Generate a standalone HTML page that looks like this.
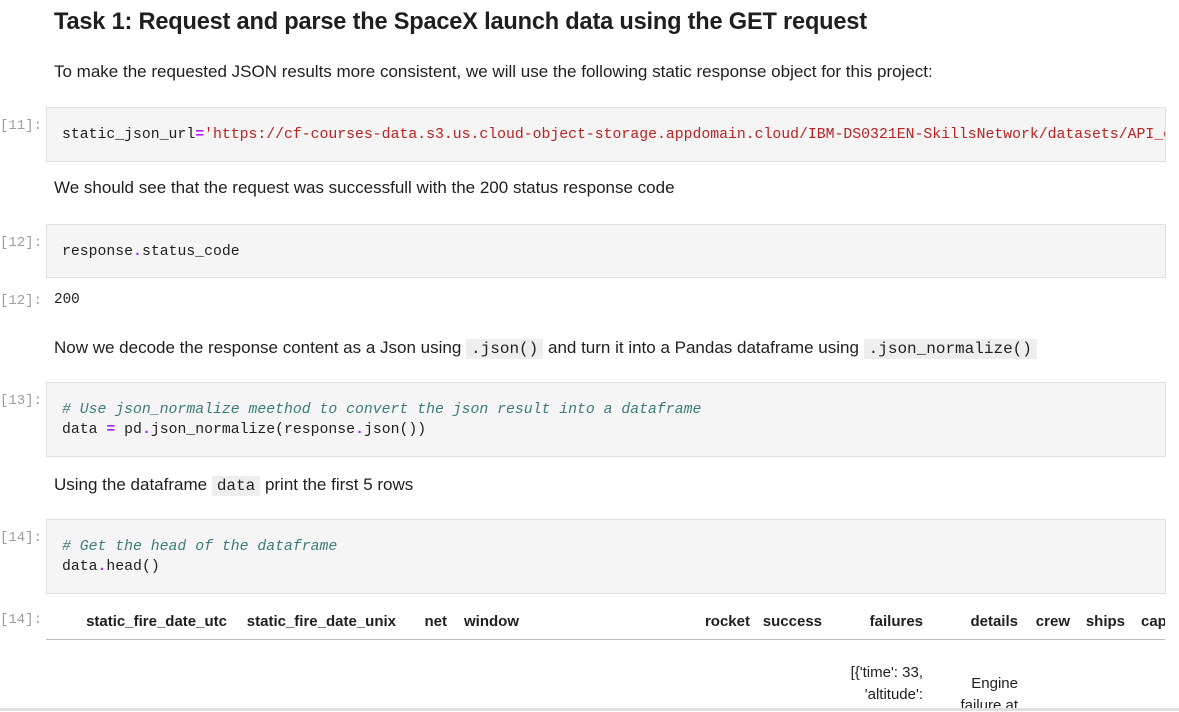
<!DOCTYPE html>
<html><head><meta charset="utf-8"><style>
body{margin:0;width:1179px;height:711px;overflow:hidden;background:#fff;position:relative;font-family:"Liberation Sans",sans-serif;color:#1f1f1f}
.a{position:absolute;white-space:nowrap}
h1{position:absolute;left:54px;top:9px;margin:0;font-size:23.6px;font-weight:bold;color:#1f1f1f;letter-spacing:-0.2px}
.md{font-size:17px;left:54px}
.cell{position:absolute;left:46px;width:1118px;background:#f5f5f5;border:1px solid #e0e0e0;overflow:hidden}
.code{position:absolute;left:15px;font-family:"Liberation Mono","DejaVu Sans Mono",monospace;font-size:14.8px;line-height:20px;white-space:pre;color:#1f1f1f}
.p{font-family:"Liberation Mono",monospace;font-size:14px;color:#9e9e9e;left:0}
.s{color:#ba2121}.o{color:#aa22ff;font-weight:bold}.c{color:#3d7b7b;font-style:italic}
.ic{font-family:"Liberation Mono",monospace;background:#eee;padding:1px 5px;font-size:16px}
.th{font-size:15px;font-weight:bold;top:612px;text-align:right}
.td{font-size:15px;text-align:right}
</style></head><body>
<h1>Task 1: Request and parse the SpaceX launch data using the GET request</h1>
<div class="a md" style="top:62px">To make the requested JSON results more consistent, we will use the following static response object for this project:</div>

<div class="a p" style="top:118px">[11]:</div>
<div class="cell" style="top:107px;height:53px"><div class="code" style="top:17px">static_json_url<span class="o">=</span><span class="s">'https://cf-courses-data.s3.us.cloud-object-storage.appdomain.cloud/IBM-DS0321EN-SkillsNetwork/datasets/API_call_spacex_api.json'</span></div></div>

<div class="a md" style="top:178px">We should see that the request was successfull with the 200 status response code</div>

<div class="a p" style="top:235px">[12]:</div>
<div class="cell" style="top:224px;height:52px"><div class="code" style="top:17px">response<span class="o">.</span>status_code</div></div>

<div class="a p" style="top:293px">[12]:</div>
<div class="a" style="left:54px;top:292px;font-family:'Liberation Mono',monospace;font-size:14.3px">200</div>

<div class="a md" style="top:338px">Now we decode the response content as a Json using <span class="ic">.json()</span> and turn it into a Pandas dataframe using <span class="ic">.json_normalize()</span></div>

<div class="a p" style="top:393px">[13]:</div>
<div class="cell" style="top:382px;height:73px"><div class="code" style="top:17px"><span class="c"># Use json_normalize meethod to convert the json result into a dataframe</span>
data <span class="o">=</span> pd<span class="o">.</span>json_normalize(response<span class="o">.</span>json())</div></div>

<div class="a md" style="top:475px">Using the dataframe <span class="ic">data</span> print the first 5 rows</div>

<div class="a p" style="top:530px">[14]:</div>
<div class="cell" style="top:519px;height:73px"><div class="code" style="top:17px"><span class="c"># Get the head of the dataframe</span>
data<span class="o">.</span>head()</div></div>

<div class="a p" style="top:612px">[14]:</div>
<div style="position:absolute;left:46px;top:612px;width:1119px;height:100px;overflow:hidden">
<div class="a th" style="right:938px;top:1px">static_fire_date_utc</div>
<div class="a th" style="right:769px;top:1px">static_fire_date_unix</div>
<div class="a th" style="right:718px;top:1px">net</div>
<div class="a th" style="left:418px;top:1px">window</div>
<div class="a th" style="right:415px;top:1px">rocket</div>
<div class="a th" style="right:343px;top:1px">success</div>
<div class="a th" style="right:242px;top:1px">failures</div>
<div class="a th" style="right:147px;top:1px">details</div>
<div class="a th" style="right:95px;top:1px">crew</div>
<div class="a th" style="right:40px;top:1px">ships</div>
<div class="a th" style="left:1095px;top:1px">capsules</div>
<div style="position:absolute;left:0;top:27px;width:1119px;height:1px;background:#bdbdbd"></div>
<div class="a td" style="right:242px;top:50px;line-height:22px">[{'time': 33,<br>'altitude':</div>
<div class="a td" style="right:147px;top:61px;line-height:22px">Engine<br>failure at</div>
</div>
<div style="position:absolute;left:0;top:708px;width:1179px;height:3px;background:#e0e0e0"></div>
</body></html>
